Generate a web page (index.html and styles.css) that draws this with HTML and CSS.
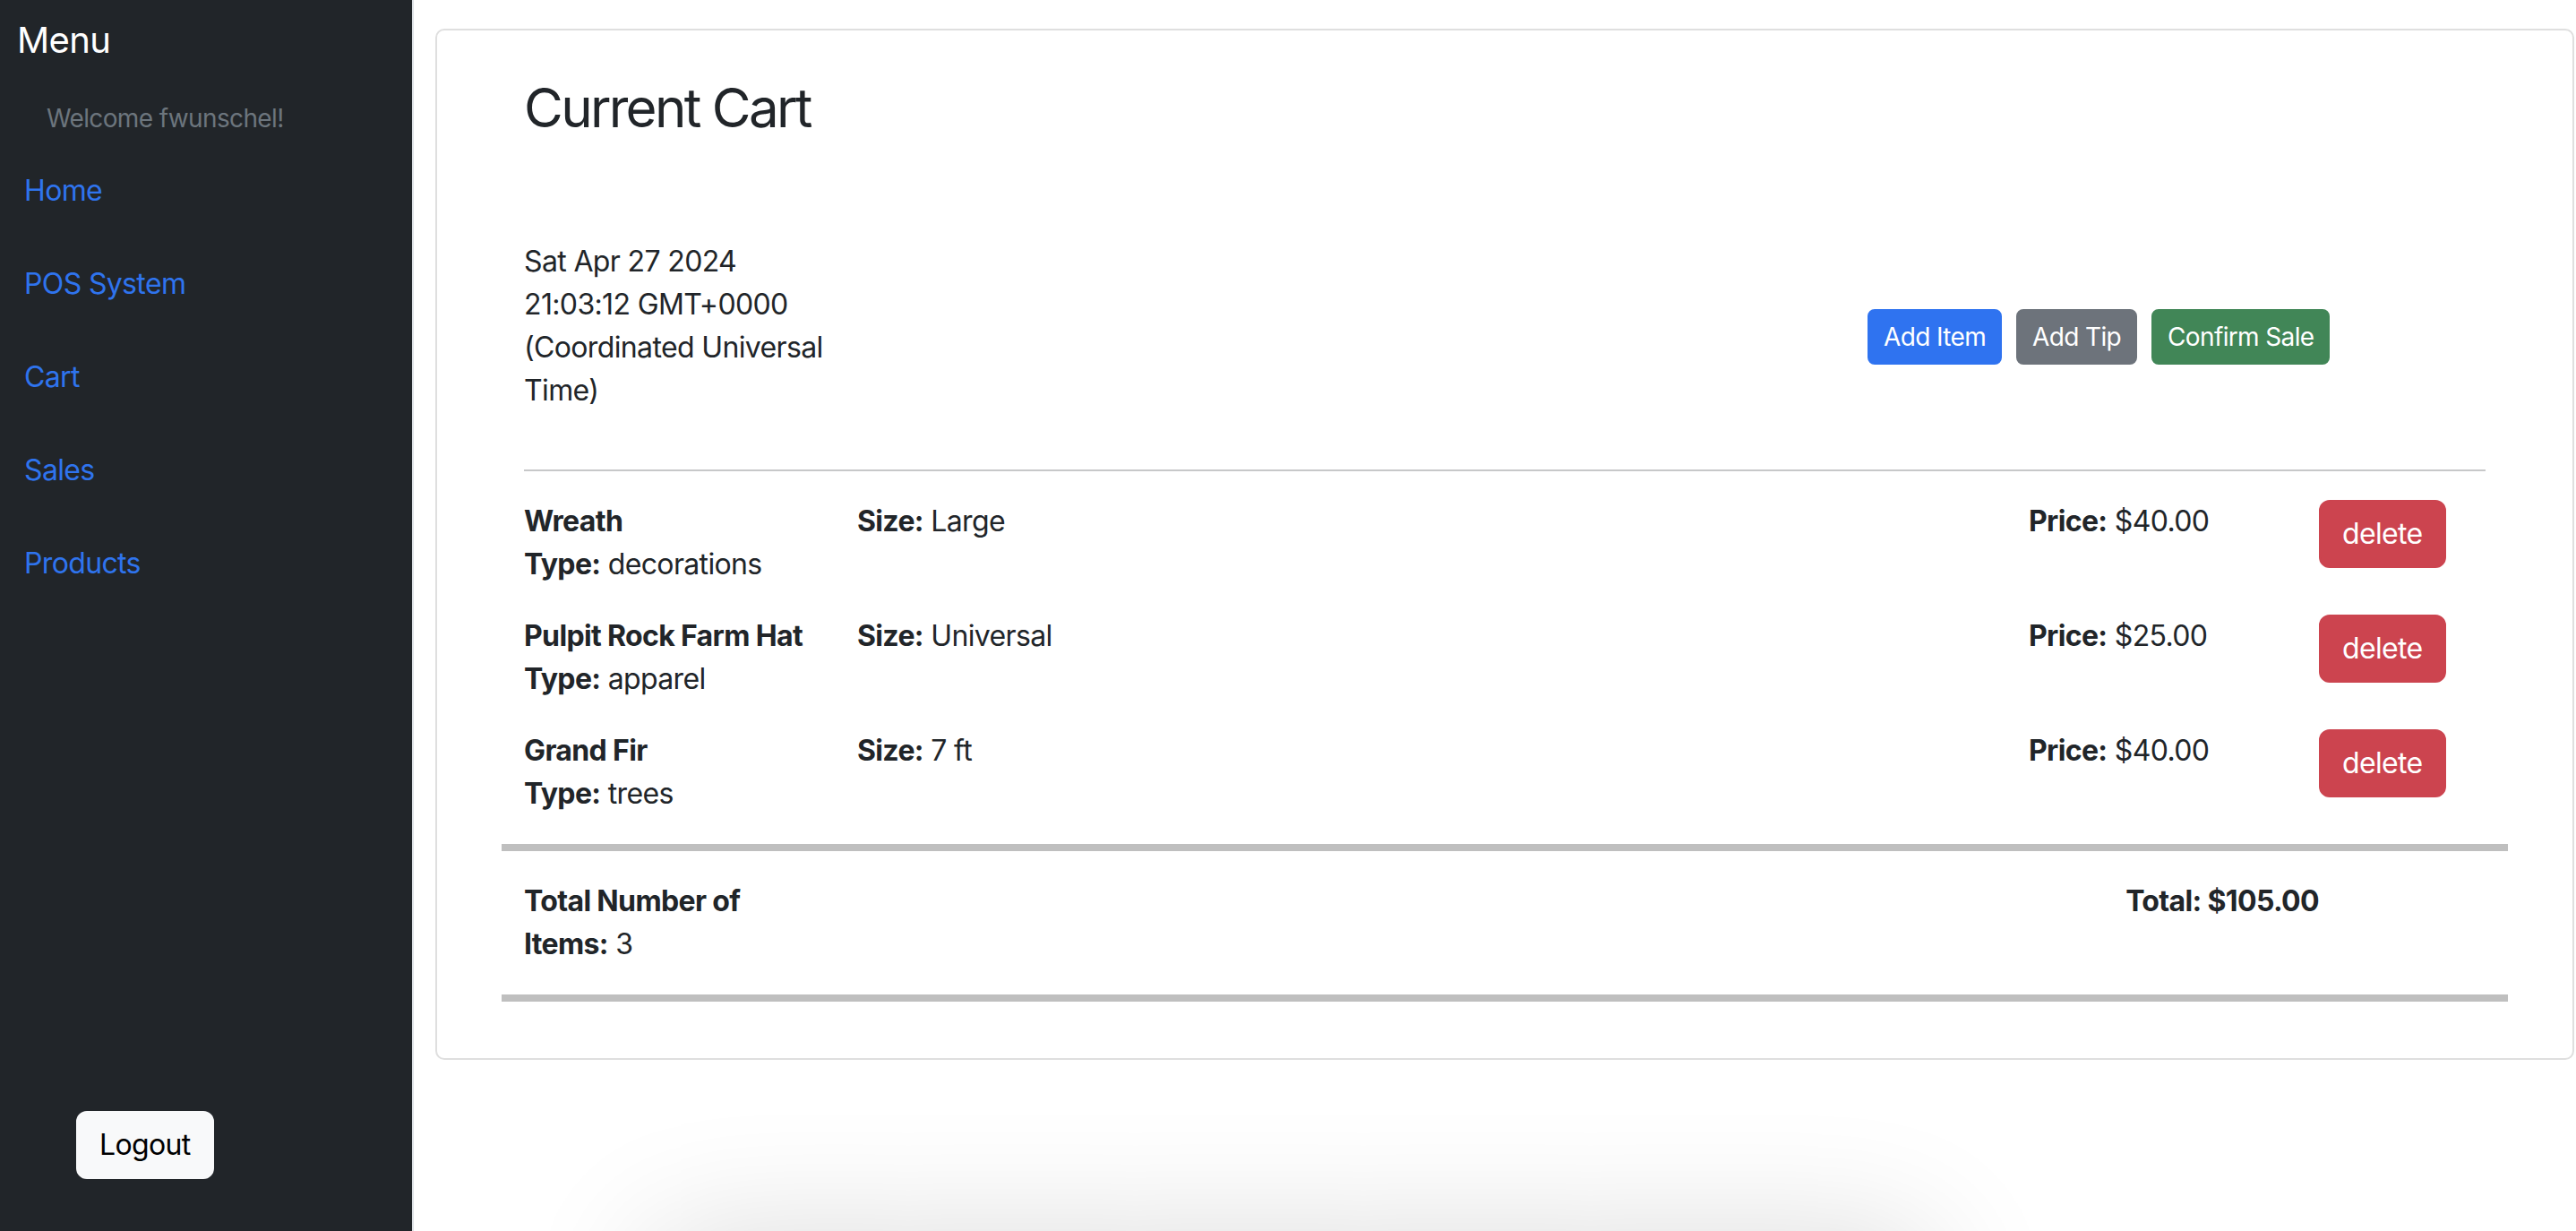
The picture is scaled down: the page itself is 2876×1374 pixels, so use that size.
FILE: index.html
```html
<!DOCTYPE html>
<html lang="en">
<head>
<meta charset="utf-8">
<title>Current Cart</title>
<link rel="stylesheet" href="styles.css">
</head>
<body>
<div class="layout">
  <aside class="sidebar">
    <div class="menu-title">Menu</div>
    <div class="welcome">Welcome fwunschel!</div>
    <nav class="nav">
      <a class="nav-link" href="#">Home</a>
      <a class="nav-link" href="#">POS System</a>
      <a class="nav-link" href="#">Cart</a>
      <a class="nav-link" href="#">Sales</a>
      <a class="nav-link" href="#">Products</a>
    </nav>
    <button class="btn btn-light logout" type="button">Logout</button>
  </aside>
  <main class="main">
    <section class="card">
      <h2 class="title">Current Cart</h2>
      <div class="date-row">
        <div class="date">Sat Apr 27 2024 21:03:12 GMT+0000 (Coordinated Universal Time)</div>
        <div class="actions">
          <button class="btn btn-sm btn-primary" type="button">Add Item</button>
          <button class="btn btn-sm btn-secondary" type="button">Add Tip</button>
          <button class="btn btn-sm btn-success" type="button">Confirm Sale</button>
        </div>
      </div>
      <hr class="divider">
      <div class="items">
        <div class="item">
          <div class="item-main">
            <div class="name">Wreath</div>
            <div><b>Type:</b> decorations</div>
          </div>
          <div><b>Size:</b> Large</div>
          <div><b>Price:</b> $40.00</div>
          <div><button class="btn btn-danger" type="button">delete</button></div>
        </div>
        <div class="item">
          <div class="item-main">
            <div class="name">Pulpit Rock Farm Hat</div>
            <div><b>Type:</b> apparel</div>
          </div>
          <div><b>Size:</b> Universal</div>
          <div><b>Price:</b> $25.00</div>
          <div><button class="btn btn-danger" type="button">delete</button></div>
        </div>
        <div class="item">
          <div class="item-main">
            <div class="name">Grand Fir</div>
            <div><b>Type:</b> trees</div>
          </div>
          <div><b>Size:</b> 7 ft</div>
          <div><b>Price:</b> $40.00</div>
          <div><button class="btn btn-danger" type="button">delete</button></div>
        </div>
      </div>
      <hr class="thick">
      <div class="totals">
        <div class="totals-count"><b>Total Number of</b> <b>Items:</b> 3</div>
        <div class="total-sum">Total: $105.00</div>
      </div>
      <hr class="thick last">
    </section>
  </main>
</div>
<div class="overlay-shadow"></div>
</body>
</html>
```

FILE: styles.css
```css
* { box-sizing: border-box; }

html, body {
  margin: 0;
  padding: 0;
}

body {
  font-family: Inter, "Noto Sans", sans-serif;
  font-size: 32px;
  line-height: 48px;
  letter-spacing: -0.02em;
  color: #212529;
  background: #fff;
  overflow: hidden;
}

b { font-weight: 700; }

.layout {
  display: flex;
  height: 1374px;
}

/* Sidebar */
.sidebar {
  width: 462px;
  flex: none;
  background: #212529;
  border-right: 2px solid #dee2e6;
  display: flex;
  flex-direction: column;
}

.menu-title {
  margin: 21px 0 0 19px;
  font-size: 40px;
  line-height: 48px;
  color: #fff;
}

.welcome {
  margin: 42px 0 0 52px;
  font-size: 28px;
  line-height: 42px;
  color: #6c757d;
}

.nav {
  display: flex;
  flex-direction: column;
  margin-top: 8px;
}

.nav-link {
  display: block;
  padding: 28px 0 28px 27px;
  color: #2f74ee;
  text-decoration: none;
}

.logout {
  margin: auto 0 58px 85px;
  align-self: flex-start;
}

/* Buttons */
.btn {
  font-family: inherit;
  letter-spacing: inherit;
  font-size: 32px;
  line-height: 48px;
  padding: 12px 24px;
  border: 2px solid transparent;
  border-radius: 12px;
  color: #fff;
  cursor: pointer;
}

.btn-sm {
  font-size: 28px;
  line-height: 42px;
  padding: 8px 16px;
  border-radius: 8px;
}

.btn-light { background: #f8f9fa; border-color: #f8f9fa; color: #000; }
.btn-primary { background: #2f73f0; border-color: #2f73f0; }
.btn-secondary { background: #6d737b; border-color: #6d737b; }
.btn-success { background: #418657; border-color: #418657; }
.btn-danger { background: #cc444f; border-color: #cc444f; }

/* Main */
.main {
  flex: 1;
  padding: 32px 2px 0 24px;
}

.card {
  border: 2px solid #dfdfdf;
  border-radius: 10px;
  padding: 50px 97px 63px;
}

.title {
  margin: 0;
  font-size: 60px;
  line-height: 72px;
  font-weight: 400;
  letter-spacing: -0.045em;
}

.date-row {
  display: grid;
  grid-template-columns: 1500px auto;
  align-items: start;
  margin-top: 112px;
}

.date { max-width: 350px; }

.actions {
  display: flex;
  gap: 16px;
  margin-top: 77px;
}

.divider {
  height: 0;
  margin: 64px 0 32px;
  border: 0;
  border-top: 2px solid #c7c8c9;
}

.items {
  display: flex;
  flex-direction: column;
  gap: 32px;
}

.item,
.totals {
  display: grid;
  grid-template-columns: 372px 1308px 324px auto;
  align-items: start;
}

.item-main { padding-right: 16px; }

.name { font-weight: 700; white-space: nowrap; }

.thick {
  height: 0;
  margin: 32px -25px;
  border: 0;
  border-top: 8px solid #bfbfbf;
}

.thick.last { margin-bottom: 0; }

.totals-count { max-width: 325px; }

.total-sum {
  grid-column: 3;
  justify-self: end;
  font-weight: 700;
}

/* shadow of an element sitting just below the viewport */
.overlay-shadow {
  position: fixed;
  left: 730px;
  top: 1384px;
  width: 1420px;
  height: 200px;
  background: #fff;
  border-radius: 24px;
  box-shadow: 0 0 150px rgba(0, 0, 0, 0.16);
}
```
